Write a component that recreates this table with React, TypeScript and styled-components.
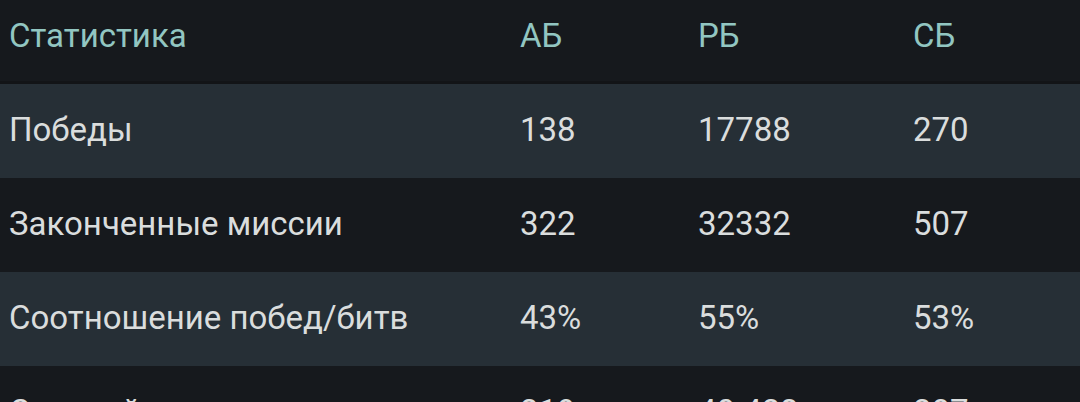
import React from "react";
import styled, { createGlobalStyle } from "styled-components";

const GlobalStyle = createGlobalStyle`
  html, body {
    margin: 0;
    padding: 0;
    background: #16191d;
    overflow: hidden;
  }
  body {
    font-family: Roboto, "Noto Sans", sans-serif;
  }
`;

const Table = styled.div`
  width: 1080px;
  background: #16191d;
`;

const Row = styled.div<{ $striped?: boolean; $header?: boolean }>`
  display: grid;
  grid-template-columns: 511px 178px 215px 1fr;
  align-items: center;
  padding-left: 9px;
  height: ${(p) => (p.$header ? "84px" : "94px")};
  padding-bottom: ${(p) => (p.$header ? "10px" : "3px")};
  box-sizing: border-box;
  background: ${(p) => (p.$striped ? "#262f36" : "#16191d")};
  border-bottom: ${(p) => (p.$header ? "3px solid #121417" : "none")};
`;

const Cell = styled.div<{ $header?: boolean }>`
  font-size: 33px;
  line-height: 1;
  color: ${(p) => (p.$header ? "#92c6c1" : "#dadddd")};
  white-space: nowrap;
`;

const rows = [
  { label: "Победы", values: ["138", "17788", "270"] },
  { label: "Законченные миссии", values: ["322", "32332", "507"] },
  { label: "Соотношение побед/битв", values: ["43%", "55%", "53%"] },
  { label: "Смертей", values: ["219", "40 423", "287"] },
];

export default function App() {
  return (
    <>
      <GlobalStyle />
      <Table>
        <Row $header>
          <Cell $header>Статистика</Cell>
          <Cell $header>АБ</Cell>
          <Cell $header>РБ</Cell>
          <Cell $header>СБ</Cell>
        </Row>
        {rows.map((r, i) => (
          <Row key={r.label} $striped={i % 2 === 0}>
            <Cell>{r.label}</Cell>
            {r.values.map((v, j) => (
              <Cell key={j}>{v}</Cell>
            ))}
          </Row>
        ))}
      </Table>
    </>
  );
}
